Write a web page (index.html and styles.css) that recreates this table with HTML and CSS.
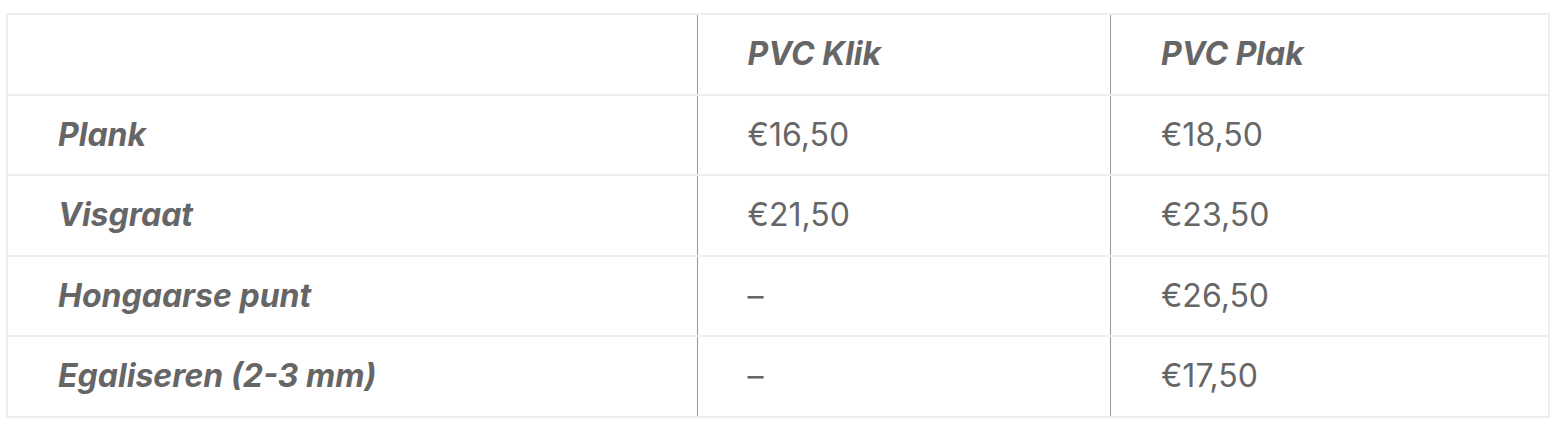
FILE: index.html
```html
<!DOCTYPE html>
<html lang="nl">
<head>
<meta charset="utf-8">
<title>Prijzen</title>
<link rel="stylesheet" href="styles.css">
</head>
<body>
<table class="prices">
  <colgroup>
    <col class="c1">
    <col class="c2">
    <col class="c3">
  </colgroup>
  <thead>
    <tr>
      <th class="label"></th>
      <th class="head">PVC Klik</th>
      <th class="head">PVC Plak</th>
    </tr>
  </thead>
  <tbody>
    <tr><th class="label">Plank</th><td>€16,50</td><td>€18,50</td></tr>
    <tr><th class="label">Visgraat</th><td>€21,50</td><td>€23,50</td></tr>
    <tr><th class="label">Hongaarse punt</th><td>–</td><td>€26,50</td></tr>
    <tr><th class="label">Egaliseren (2-3 mm)</th><td>–</td><td>€17,50</td></tr>
  </tbody>
</table>
</body>
</html>
```
FILE: styles.css
```css
html, body {
  margin: 0;
  padding: 0;
  background: #fff;
}
body {
  padding: 13px 14px 0 6px;
  font-family: Inter, "Noto Sans", sans-serif;
  color: #666666;
}
.prices {
  width: 1544px;
  border-collapse: collapse;
  border: 2px solid #eeeeee;
  font-size: 32px;
}
.c1 { width: 691px; }
.c2 { width: 414px; }
.c3 { width: 439px; }
.prices tr {
  border-bottom: 2px solid #eeeeee;
  height: 80.5px;
}
.prices th,
.prices td {
  padding: 0 0 0 50px;
  text-align: left;
  vertical-align: middle;
  line-height: 48px;
}
.prices th.label,
.prices th.head {
  font-weight: 700;
  font-style: italic;
}
.prices th.head,
.prices td {
  border-left: 1px solid #999;
}
.prices td {
  font-weight: 400;
}
```
